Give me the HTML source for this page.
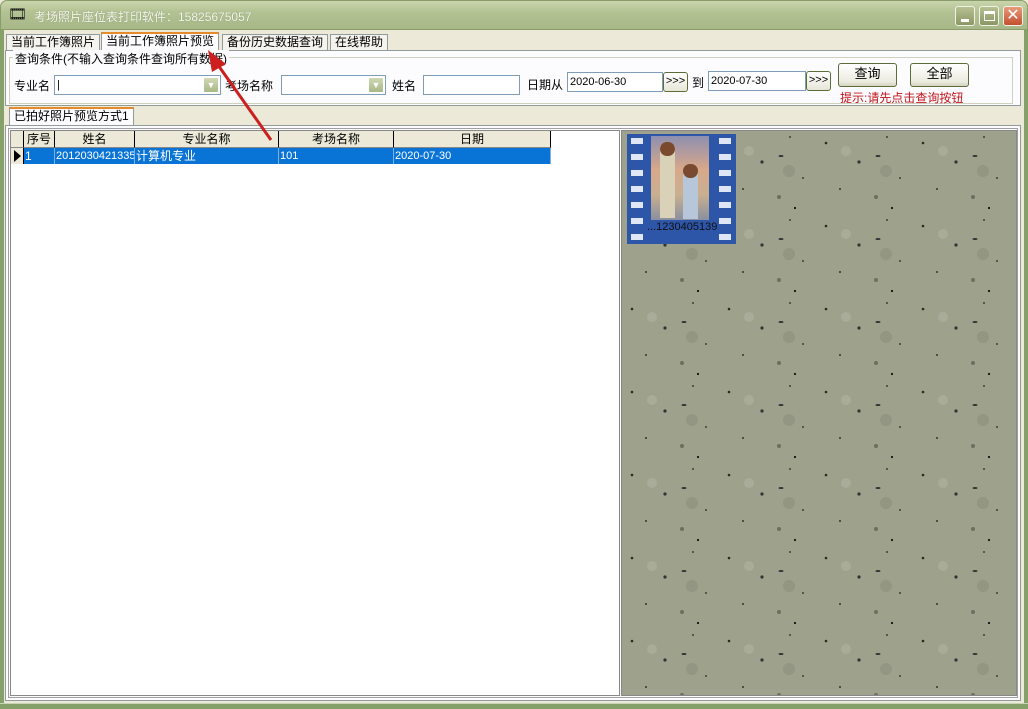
<!DOCTYPE html>
<html><head><meta charset="utf-8"><style>
*{margin:0;padding:0;box-sizing:border-box}
body{width:1028px;height:709px;overflow:hidden;font-family:"Liberation Sans","Noto Sans CJK SC",sans-serif;font-size:12px;color:#000;position:relative;background:#ece9d8}
.abs{position:absolute}
#title{left:0;top:0;width:1028px;height:30px;background:linear-gradient(#c9d5ab,#b3c293 40%,#a7b786);border-radius:7px 7px 0 0;border:1px solid #8a9c6c}
#title .t{left:33px;top:7px;color:#f4f6ee;font-size:12px;text-shadow:0 0 1px #7d8a62}
.wb{top:6px;width:20px;height:20px;border:1px solid #f0f2e6;border-radius:3px;background:linear-gradient(#b6c092,#8b9765)}
#frameL{left:0;top:29px;width:4px;height:680px;background:#86a06a}
#frameR{right:0;top:29px;width:4px;height:680px;background:#86a06a}
#frameB{left:0;top:703px;width:1028px;height:6px;background:#86a06a;border-top:1px solid #c9d3b5}
.tab{top:33px;height:17px;border:1px solid #919b9c;border-bottom:none;background:#f4f3ee;font-size:12px;line-height:15px;padding:0 4px}
.inp{height:20px;border:1px solid #7f9db9;background:#fff;font-size:11px;line-height:18px;padding-left:2px}
.dd{width:16px;height:16px;top:1px;right:1px;background:linear-gradient(#cfd9b4,#a9b887);border:1px solid #fff;border-radius:2px;color:#fff;font-size:9px;line-height:14px;text-align:center}
.btn{height:24px;border:1px solid #5d6d3a;border-radius:3px;background:linear-gradient(#fff,#ecebe0 80%,#d6d3c1);text-align:center;font-size:13px;line-height:20px}
.sm{width:25px;height:20px;border:1px solid #5d6d3a;border-radius:3px;background:linear-gradient(#fff,#e8e6d8);font-size:11px;line-height:17px;text-align:center}
.th{top:131px;height:17px;border-right:1px solid #000;border-bottom:1px solid #888;background:#ece9d8;text-align:center;font-size:12px;line-height:16px}
.td{top:148px;height:16px;background:#0a74d6;color:#fff;font-size:12px;line-height:16px;border-right:1px solid #7fb0e8;padding-left:1px;white-space:nowrap;overflow:hidden}
.h{position:absolute;width:12px;height:6px;background:#dfe6f5}
</style></head><body>
<div id="title" class="abs">
 <div class="abs" style="left:7px;top:4px;font-size:15px;color:#111">🎞</div>
 <div class="abs t">考场照片座位表打印软件：15825675057</div>
</div>
<div class="abs wb" style="left:955px"><div class="abs" style="left:5px;top:12px;width:8px;height:3px;background:#fff"></div></div>
<div class="abs wb" style="left:979px"><div class="abs" style="left:4px;top:4px;width:11px;height:10px;border:1px solid #fff;border-top-width:3px"></div></div>
<div class="abs wb" style="left:1003px;background:linear-gradient(#e69a7c,#c4502e);color:#fff;font-size:16px;line-height:17px;text-align:center">✕</div>
<div id="frameL" class="abs"></div><div id="frameR" class="abs"></div>

<div class="abs tab" style="left:6px;top:34px">当前工作簿照片</div>
<div class="abs tab" style="left:101px;top:32px;height:19px;background:#fcfcfe;border-top:2px solid #e68b2c">当前工作簿照片预览</div>
<div class="abs tab" style="left:222px;top:34px">备份历史数据查询</div>
<div class="abs tab" style="left:330px;top:34px">在线帮助</div>

<div class="abs" style="left:5px;top:50px;width:1016px;height:56px;border:1px solid #919b9c;background:#fcfcfe"></div>
<div class="abs" style="left:9px;top:57px;width:1004px;height:47px;border:1px solid #d0d0bf"></div>
<div class="abs" style="left:13px;top:50px;background:#fcfcfe;font-size:12px;padding:0 2px">查询条件(不输入查询条件查询所有数据)</div>

<div class="abs" style="left:14px;top:77px;font-size:12px">专业名</div>
<div class="abs inp" style="left:54px;top:75px;width:167px">|<div class="abs dd">▼</div></div>
<div class="abs" style="left:225px;top:77px;font-size:12px">考场名称</div>
<div class="abs inp" style="left:281px;top:75px;width:105px"><div class="abs dd">▼</div></div>
<div class="abs" style="left:392px;top:77px;font-size:12px">姓名</div>
<div class="abs inp" style="left:423px;top:75px;width:97px"></div>
<div class="abs" style="left:527px;top:76px;font-size:12px">日期从</div>
<div class="abs inp" style="left:567px;top:72px;width:96px">2020-06-30</div>
<div class="abs sm" style="left:663px;top:72px">&gt;&gt;&gt;</div>
<div class="abs" style="left:692px;top:74px;font-size:12px">到</div>
<div class="abs inp" style="left:708px;top:71px;width:98px">2020-07-30</div>
<div class="abs sm" style="left:806px;top:71px">&gt;&gt;&gt;</div>
<div class="abs btn" style="left:838px;top:63px;width:59px">查询</div>
<div class="abs btn" style="left:910px;top:63px;width:59px">全部</div>
<div class="abs" style="left:840px;top:89px;color:#c0141a;font-size:12px">提示:请先点击查询按钮</div>

<div class="abs" style="left:5px;top:106px;width:1016px;height:20px;background:#ece9d8"></div>
<div class="abs tab" style="left:9px;top:107px;height:18px;background:#fcfcfe;border-top:2px solid #e68b2c">已拍好照片预览方式1</div>
<div class="abs" style="left:5px;top:125px;width:1016px;height:576px;border:1px solid #919b9c;background:#fcfcfe"></div>
<div class="abs" style="left:8px;top:128px;width:1010px;height:570px;border:1px solid #a0a0a0"></div>

<div class="abs" style="left:10px;top:130px;width:610px;height:566px;background:#fff;border:1px solid #888"></div>
<div class="abs th" style="left:11px;width:13px"></div>
<div class="abs th" style="left:24px;width:31px">序号</div>
<div class="abs th" style="left:55px;width:80px">姓名</div>
<div class="abs th" style="left:135px;width:144px">专业名称</div>
<div class="abs th" style="left:279px;width:115px">考场名称</div>
<div class="abs th" style="left:394px;width:157px">日期</div>
<div class="abs" style="left:11px;top:148px;width:13px;height:16px;background:#ece9d8;border-right:1px solid #000"><div class="abs" style="left:3px;top:2px;width:0;height:0;border-left:7px solid #000;border-top:6px solid transparent;border-bottom:6px solid transparent"></div></div>
<div class="abs td" style="left:24px;width:31px">1</div>
<div class="abs td" style="left:55px;width:80px;font-size:11px">2012030421335</div>
<div class="abs td" style="left:135px;width:144px">计算机专业</div>
<div class="abs td" style="left:279px;width:115px;font-size:11px">101</div>
<div class="abs td" style="left:394px;width:157px;font-size:11px">2020-07-30</div>

<div class="abs" style="left:621px;top:130px;width:396px;height:566px;border:1px solid #888;background:#9c9f8a;overflow:hidden">
<svg width="396" height="566"><defs><pattern id="p" width="97" height="83" patternUnits="userSpaceOnUse">
<rect width="97" height="83" fill="#9ea18c"/>
<circle cx="10" cy="12" r="1.3" fill="#2a2a22"/><circle cx="43" cy="31" r="1.6" fill="#333"/><circle cx="71" cy="6" r="0.9" fill="#222"/>
<circle cx="24" cy="58" r="1" fill="#333"/><circle cx="60" cy="66" r="2" fill="#6d6f60"/><circle cx="84" cy="47" r="0.9" fill="#222"/>
<circle cx="30" cy="20" r="5" fill="#a9ac98"/><circle cx="70" cy="40" r="6" fill="#939682"/>
<circle cx="76" cy="77" r="1.1" fill="#111"/><ellipse cx="62" cy="25" rx="2.5" ry="1" fill="#333"/>
</pattern></defs><rect width="396" height="566" fill="url(#p)"/></svg>
<div class="abs" style="left:5px;top:3px;width:109px;height:110px;background:#2d55a8">
 <div class="h" style="left:4px;top:4px"></div><div class="h" style="left:4px;top:20px"></div><div class="h" style="left:4px;top:36px"></div><div class="h" style="left:4px;top:52px"></div><div class="h" style="left:4px;top:68px"></div><div class="h" style="left:4px;top:84px"></div><div class="h" style="left:4px;top:100px"></div>
 <div class="h" style="left:92px;top:4px"></div><div class="h" style="left:92px;top:20px"></div><div class="h" style="left:92px;top:36px"></div><div class="h" style="left:92px;top:52px"></div><div class="h" style="left:92px;top:68px"></div><div class="h" style="left:92px;top:84px"></div><div class="h" style="left:92px;top:100px"></div>
 <div class="abs" style="left:24px;top:2px;width:58px;height:84px;background:linear-gradient(#8e8fb0,#d8a88a 40%,#c8b090 70%,#8a8fa0)"></div>
 <div class="abs" style="left:33px;top:12px;width:15px;height:72px;background:#d9d2b8"></div>
 <div class="abs" style="left:33px;top:8px;width:15px;height:14px;border-radius:7px;background:#7a4a30"></div>
 <div class="abs" style="left:56px;top:38px;width:15px;height:47px;background:#b7c6d8"></div>
 <div class="abs" style="left:56px;top:30px;width:15px;height:14px;border-radius:7px;background:#7a4a30"></div>
 <div class="abs" style="left:20px;top:87px;color:#111;font-size:11px">...1230405139</div>
</div>
</div>
<svg class="abs" style="left:0;top:0" width="1028" height="709"><line x1="271" y1="140" x2="218" y2="65" stroke="#cc1f1f" stroke-width="3"/><polygon points="208,50 226,64 212,72" fill="#cc1f1f"/></svg>
<div id="frameB" class="abs"></div>
</body></html>
